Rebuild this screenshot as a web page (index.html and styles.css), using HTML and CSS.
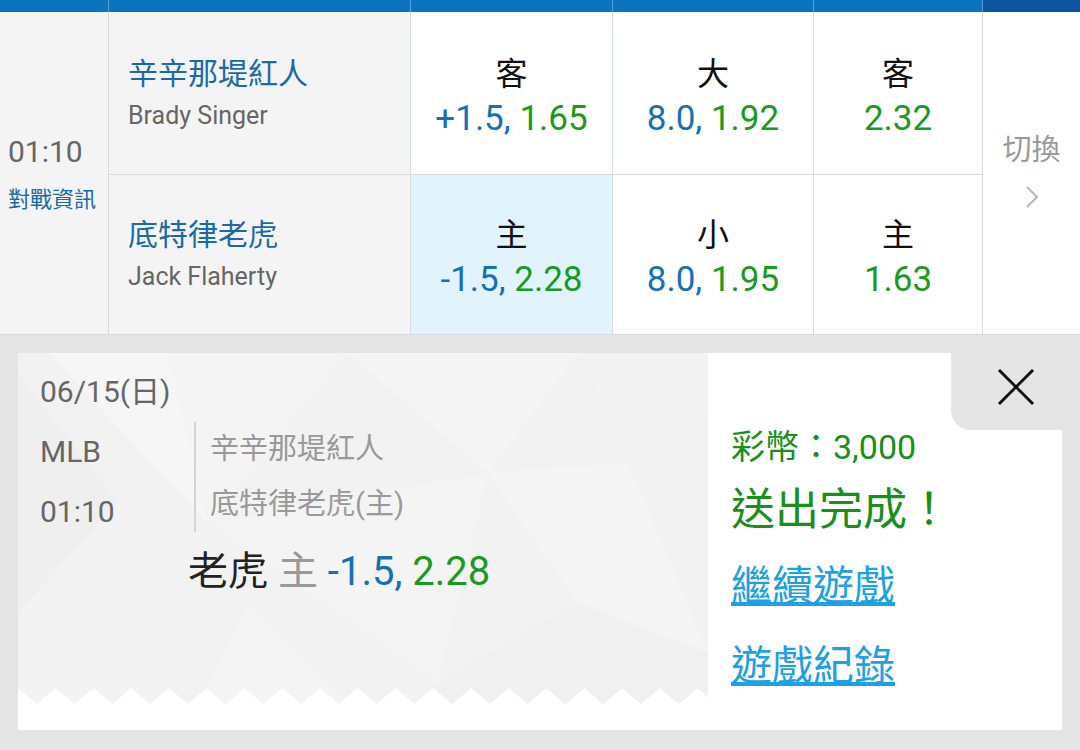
FILE: index.html
```html
<!DOCTYPE html>
<html lang="zh-Hant">
<head>
    <meta charset="UTF-8">
    <meta name="viewport" content="width=device-width, initial-scale=1.0">
    <title>投注完成</title>
    <link rel="stylesheet" href="styles.css">
</head>
<body>
    <div class="board">
        <div class="head-bar">
            <div class="head-cell"></div>
            <div class="head-cell"></div>
            <div class="head-cell"></div>
            <div class="head-cell"></div>
            <div class="head-cell"></div>
            <div class="head-cell last"></div>
        </div>

        <div class="match">
            <div class="time-cell">
                <div class="time">01:10</div>
                <div class="info-link">對戰資訊</div>
            </div>

            <div class="team-cell">
                <div class="team-name">辛辛那堤紅人</div>
                <div class="pitcher">Brady Singer</div>
            </div>
            <div class="odds-cell">
                <div class="odds-label">客</div>
                <div class="odds-value"><span class="line">+1.5,</span> <span class="price">1.65</span></div>
            </div>
            <div class="odds-cell">
                <div class="odds-label">大</div>
                <div class="odds-value"><span class="line">8.0,</span> <span class="price">1.92</span></div>
            </div>
            <div class="odds-cell">
                <div class="odds-label">客</div>
                <div class="odds-value"><span class="price">2.32</span></div>
            </div>

            <div class="switch-cell">
                <div class="switch-text">切換</div>
                <svg class="chevron" width="14" height="24" viewBox="0 0 14 24">
                    <polyline points="2,2 12,12 2,22" fill="none" stroke="#b9b9b9" stroke-width="2.2"/>
                </svg>
            </div>

            <div class="team-cell">
                <div class="team-name">底特律老虎</div>
                <div class="pitcher">Jack Flaherty</div>
            </div>
            <div class="odds-cell picked">
                <div class="odds-label">主</div>
                <div class="odds-value"><span class="line">-1.5,</span> <span class="price">2.28</span></div>
            </div>
            <div class="odds-cell">
                <div class="odds-label">小</div>
                <div class="odds-value"><span class="line">8.0,</span> <span class="price">1.95</span></div>
            </div>
            <div class="odds-cell">
                <div class="odds-label">主</div>
                <div class="odds-value"><span class="price">1.63</span></div>
            </div>
        </div>
    </div>

    <div class="result">
        <div class="result-card">
            <div class="ticket">
                <svg class="ticket-bg" viewBox="0 0 690 352" preserveAspectRatio="none">
                    <defs>
                        <clipPath id="ticket-edge">
                            <path d="M0,0 V335 L18.9,351 L37.8,335 L56.6,351 L75.5,335 L94.4,351 L113.3,335 L132.1,351 L151,335 L169.9,351 L188.8,335 L207.6,351 L226.5,335 L245.4,351 L264.3,335 L283.1,351 L302,335 L320.9,351 L339.8,335 L358.6,351 L377.5,335 L396.4,351 L415.3,335 L434.1,351 L453,335 L471.9,351 L490.8,335 L509.6,351 L528.5,335 L547.4,351 L566.3,335 L585.1,351 L604,335 L622.9,351 L641.8,335 L660.6,351 L679.5,335 L690,344 V0 Z"/>
                        </clipPath>
                    </defs>
                    <g clip-path="url(#ticket-edge)">
                        <rect width="690" height="352" fill="#f2f2f2"/>
                        <polygon points="30,0 150,0 190,170" fill="#f6f6f6"/>
                        <polygon points="150,0 330,0 190,170" fill="#f4f4f4"/>
                        <polygon points="330,0 560,0 470,120" fill="#f5f5f5"/>
                        <polygon points="560,0 690,0 690,60 610,110" fill="#f3f3f3"/>
                        <polygon points="0,20 100,150 0,260" fill="#efefef"/>
                        <polygon points="190,170 470,120 420,330" fill="#f4f4f4"/>
                        <polygon points="470,120 610,110 690,300 560,250" fill="#f5f5f5"/>
                        <polygon points="100,150 190,170 60,352 0,352 0,260" fill="#f3f3f3"/>
                        <polygon points="420,330 560,250 690,300 690,352 400,352" fill="#f0f0f0"/>
                        <polygon points="230,250 330,352 180,352" fill="#f4f4f4"/>
                    </g>
                </svg>

                <div class="ticket-body">
                    <div class="ticket-date">06/15(日)</div>
                    <div class="ticket-info">
                        <div class="ticket-meta">
                            <div>MLB</div>
                            <div>01:10</div>
                        </div>
                        <div class="ticket-teams">
                            <div>辛辛那堤紅人</div>
                            <div>底特律老虎(主)</div>
                        </div>
                    </div>
                    <div class="ticket-pick">
                        <span class="pick-team">老虎</span>
                        <span class="pick-side">主</span>
                        <span class="line">-1.5,</span> <span class="price">2.28</span>
                    </div>
                </div>
            </div>

            <div class="done-panel">
                <div class="coins">彩幣：3,000</div>
                <div class="done-msg">送出完成！</div>
                <a class="done-link first" href="#">繼續遊戲</a>
                <a class="done-link" href="#">遊戲紀錄</a>
            </div>

            <div class="close-tab">
                <svg width="38" height="38" viewBox="0 0 38 38">
                    <line x1="2" y1="2" x2="36" y2="36" stroke="#111" stroke-width="3"/>
                    <line x1="36" y1="2" x2="2" y2="36" stroke="#111" stroke-width="3"/>
                </svg>
            </div>
        </div>
    </div>
</body>
</html>
```

FILE: styles.css
```css
body {
    margin: 0;
    width: 1080px;
    height: 750px;
    overflow: hidden;
    font-family: Roboto, "Noto Sans CJK TC", sans-serif;
    background-color: #e5e5e5;
}

.board {
    background-color: #fff;
}

.head-bar {
    display: grid;
    grid-template-columns: 109px 302px 202px 201px 169px 97px;
    height: 12px;
}

.head-cell {
    background-color: #0b74bf;
    border-right: 1px solid #4f9fd8;
}

.head-cell.last {
    background-color: #0b569d;
    border-right: none;
}

.match {
    display: grid;
    grid-template-columns: 109px 302px 202px 201px 169px 97px;
    grid-template-rows: 163px 160px;
}

.match > div {
    box-sizing: border-box;
    border-right: 1px solid #d6dce2;
    border-bottom: 1px solid #d6dce2;
}

.time-cell {
    grid-row: span 2;
    background-color: #f4f4f4;
    display: flex;
    flex-direction: column;
    justify-content: center;
    padding: 3px 0 0 8px;
    border-right-color: #dadada !important;
}

.time {
    font-size: 30px;
    line-height: 36px;
    color: #666;
}

.info-link {
    font-size: 22px;
    line-height: 30px;
    margin-top: 15px;
    color: #1a6aa6;
}

.team-cell {
    background-color: #f4f4f4;
    display: flex;
    flex-direction: column;
    justify-content: center;
    padding-left: 19px;
}

.team-name {
    font-size: 30px;
    line-height: 36px;
    color: #1a6aa6;
}

.pitcher {
    font-size: 25px;
    line-height: 30px;
    margin-top: 9px;
    color: #666;
}

.odds-cell {
    display: flex;
    flex-direction: column;
    justify-content: center;
    align-items: center;
    padding-top: 6px;
}

.odds-cell.picked {
    background-color: #e1f4fd;
}

.odds-label {
    font-size: 32px;
    line-height: 40px;
    color: #111;
}

.odds-value {
    font-size: 35px;
    line-height: 40px;
    margin-top: 5px;
}

.line {
    color: #1870b3;
}

.price {
    color: #1b9a22;
}

.switch-cell {
    grid-row: span 2;
    border-right: none !important;
    display: flex;
    flex-direction: column;
    align-items: center;
    justify-content: center;
    padding-bottom: 6px;
}

.switch-text {
    font-size: 29px;
    line-height: 36px;
    color: #999;
}

.chevron {
    margin-top: 17px;
}

.result {
    padding: 18px 18px 20px 18px;
}

.result-card {
    position: relative;
    display: flex;
    height: 377px;
    background-color: #fff;
}

.ticket {
    position: relative;
    width: 690px;
    height: 352px;
}

.ticket-bg {
    position: absolute;
    top: 0;
    left: 0;
    width: 100%;
    height: 100%;
}

.ticket-body {
    position: relative;
    padding: 19px 0 0 22px;
}

.ticket-date {
    font-size: 30px;
    line-height: 40px;
    color: #666;
}

.ticket-info {
    display: flex;
    align-items: flex-start;
    margin-top: 10px;
}

.ticket-meta {
    width: 154px;
    font-size: 30px;
    line-height: 60px;
    color: #666;
}

.ticket-teams {
    border-left: 2px solid #d4d4d4;
    padding-left: 14px;
    font-size: 29px;
    line-height: 55px;
    color: #999;
}

.ticket-pick {
    margin-top: 8px;
    padding-left: 148px;
    font-size: 40px;
    line-height: 44px;
}

.pick-team {
    color: #222;
}

.pick-side {
    color: #999;
}

.done-panel {
    flex: 1;
    display: flex;
    flex-direction: column;
    align-items: flex-start;
    padding: 72px 0 0 23px;
}

.coins {
    font-size: 34px;
    line-height: 44px;
    color: #1a8f1a;
}

.done-msg {
    font-size: 44px;
    line-height: 56px;
    margin-top: 13px;
    color: #1a8f1a;
}

.done-link {
    font-size: 41px;
    line-height: 50px;
    color: #1ca0e6;
    text-decoration: underline;
    text-decoration-thickness: 4px;
    text-underline-offset: 2px;
    margin-top: 30px;
}

.done-link.first {
    margin-top: 23px;
}

.close-tab {
    position: absolute;
    top: 0;
    right: 0;
    box-sizing: border-box;
    width: 111px;
    height: 77px;
    padding: 0 0 9px 18px;
    background-color: #e5e5e5;
    border-bottom-left-radius: 20px;
    display: flex;
    align-items: center;
    justify-content: center;
}
```
